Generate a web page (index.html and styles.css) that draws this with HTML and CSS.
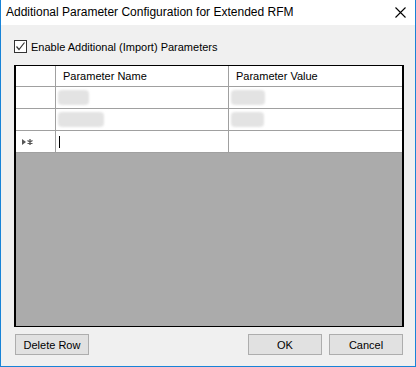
FILE: index.html
```html
<!DOCTYPE html>
<html lang="en">
<head>
  <meta charset="UTF-8" />
  <title>Additional Parameter Configuration for Extended RFM</title>
  <link rel="stylesheet" href="styles.css">
</head>
<body>
  <div class="window">
    <div class="titlebar">
      <span class="title">Additional Parameter Configuration for Extended RFM</span>
      <svg class="close" width="11" height="11" viewBox="0 0 11 11">
        <path d="M0.5 0.5 L10.5 10.5 M10.5 0.5 L0.5 10.5" stroke="#000" stroke-width="1.1" fill="none"/>
      </svg>
    </div>

    <div class="content">
      <label class="check-row">
        <span class="checkbox">
          <svg width="11" height="11" viewBox="0 0 11 11">
            <path d="M1.5 5.5 L4 8.5 L9.5 1.5" stroke="#333" stroke-width="1.2" fill="none"/>
          </svg>
        </span>
        Enable Additional (Import) Parameters
      </label>

      <div class="grid">
        <div class="row head">
          <div class="cell rh"></div>
          <div class="cell name">Parameter Name</div>
          <div class="cell value">Parameter Value</div>
        </div>
        <div class="row">
          <div class="cell rh"></div>
          <div class="cell name"><span class="blur" style="width: 31px"></span></div>
          <div class="cell value"><span class="blur" style="width: 34px"></span></div>
        </div>
        <div class="row">
          <div class="cell rh"></div>
          <div class="cell name"><span class="blur" style="width: 46px"></span></div>
          <div class="cell value"><span class="blur" style="width: 33px"></span></div>
        </div>
        <div class="row">
          <div class="cell rh">
            <svg width="11" height="6" viewBox="0 0 11 6">
              <path d="M0 0 L4 3 L0 6 Z" fill="#555"/>
              <path d="M8 0 V6 M5.5 1.5 L10.5 4.5 M10.5 1.5 L5.5 4.5" stroke="#555" stroke-width="1.3"/>
            </svg>
          </div>
          <div class="cell name"><span class="caret"></span></div>
          <div class="cell value"></div>
        </div>
        <div class="empty"></div>
      </div>

      <div class="buttons">
        <button class="btn">Delete Row</button>
        <div class="spacer"></div>
        <button class="btn">OK</button>
        <button class="btn">Cancel</button>
      </div>
    </div>
  </div>
</body>
</html>
```

FILE: styles.css
```css
:root {
  --accent: #1883d7;
  --face: #f0f0f0;
  --line: #a0a0a0;
  --dark-grey: #ababab;
}

* {
  box-sizing: border-box;
}

body {
  margin: 0;
  font-family: "Liberation Sans", Arial, sans-serif;
  font-size: 11px;
  color: #000;
}

.window {
  width: 416px;
  height: 367px;
  display: flex;
  flex-direction: column;
  background: var(--face);
  border: 1px solid var(--accent);
  border-top: none;
}

.titlebar {
  height: 25px;
  background: #fff;
  display: flex;
  align-items: center;
  padding: 0 9px 2px 5px;
}

.title {
  flex: 1;
  font-family: "Liberation Sans", Arial, sans-serif;
  font-size: 12px;
}

.close {
  margin-top: 1px;
}

.content {
  flex: 1;
  display: flex;
  flex-direction: column;
  padding: 15px 11px 11px 13px;
}

.check-row {
  display: flex;
  align-items: center;
  gap: 4px;
  height: 13px;
  margin-bottom: 12px;
}

.checkbox {
  width: 13px;
  height: 13px;
  border: 1px solid #333;
  background: #fff;
  display: flex;
  align-items: center;
  justify-content: center;
}

.grid {
  flex: 1;
  display: flex;
  flex-direction: column;
  border: 1px solid #000;
  border-left-width: 2px;
  border-right-width: 2px;
}

.row {
  display: flex;
  height: 22px;
  background: #fff;
}

.row.head {
  height: 21px;
}

.cell {
  border-right: 1px solid var(--line);
  border-bottom: 1px solid var(--line);
  display: flex;
  align-items: center;
  padding-left: 2px;
}

.cell.rh {
  width: 40px;
  padding-left: 6px;
}

.cell.name {
  width: 173px;
}

.cell.value {
  flex: 1;
  border-right: none;
}

.head .name,
.head .value {
  padding-left: 7px;
}

.blur {
  height: 15px;
  background: #e3e3e3;
  border-radius: 4px;
  filter: blur(1px);
}

.caret {
  width: 1px;
  height: 12px;
  background: #000;
  margin-left: 1px;
}

.empty {
  flex: 1;
  background: var(--dark-grey);
}

.buttons {
  display: flex;
  gap: 7px;
  margin: 7px 1px 0;
}

.spacer {
  flex: 1;
}

.btn {
  width: 74px;
  height: 21px;
  background: #e1e1e1;
  border: 1px solid #adadad;
  font-family: "Liberation Sans", Arial, sans-serif;
  font-size: 11px;
  color: #000;
  padding: 0;
}
```
